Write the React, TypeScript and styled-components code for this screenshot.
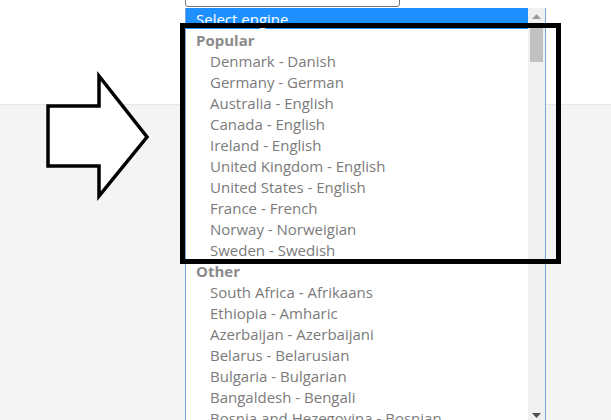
import React from 'react';
import styled, { createGlobalStyle } from 'styled-components';

const GlobalStyle = createGlobalStyle`
  html, body {
    margin: 0;
    padding: 0;
    overflow: hidden;
  }
  body {
    font-family: 'Open Sans', 'Liberation Sans', sans-serif;
    background: #f4f4f4;
  }
`;

const Page = styled.div`
  position: relative;
  width: 611px;
  height: 420px;
  overflow: hidden;
  background: #f4f4f4;
`;

const Header = styled.div`
  display: flex;
  align-items: flex-start;
  height: 105px;
  background: #fff;
  border-bottom: 1px solid #e6e6e6;
  padding-left: 185px;
  box-sizing: border-box;
`;

const SelectBox = styled.div`
  width: 215px;
  height: 28px;
  margin-top: -21px;
  box-sizing: border-box;
  border: 1px solid #767676;
  border-radius: 3px;
  background: #fff;
`;

const Dropdown = styled.div`
  position: absolute;
  top: 8px;
  left: 185px;
  width: 361px;
  height: 416px;
  box-sizing: border-box;
  display: flex;
  background: #fff;
  border-left: 1px solid #7aa3dc;
  border-right: 1px solid #7aa3dc;
  overflow: hidden;
`;

const List = styled.div`
  flex: 1;
  display: flex;
  flex-direction: column;
`;

const Row = styled.div<{ $kind?: 'selected' | 'group' | 'item' }>`
  flex: none;
  height: 21px;
  box-sizing: border-box;
  padding-top: 1px;
  line-height: 21px;
  font-size: 15px;
  white-space: nowrap;
  padding-left: ${(p) => (p.$kind === 'item' ? '24px' : '10px')};
  font-weight: ${(p) => (p.$kind === 'group' ? 700 : 400)};
  color: ${(p) => (p.$kind === 'selected' ? '#fff' : p.$kind === 'group' ? '#8a8a8a' : '#7b7b7b')};
  background: ${(p) => (p.$kind === 'selected' ? '#1e90ff' : 'transparent')};
`;

const Scrollbar = styled.div`
  width: 17px;
  background: #f0f0f0;
  display: flex;
  flex-direction: column;
  align-items: center;
`;

const ScrollButton = styled.div`
  height: 17px;
  width: 17px;
  display: flex;
  align-items: center;
  justify-content: center;
`;

const Thumb = styled.div`
  width: 13px;
  height: 34px;
  margin-top: 3px;
  background: #c1c1c1;
`;

const Track = styled.div`
  flex: 1;
`;

const Highlight = styled.div`
  position: absolute;
  left: 180px;
  top: 23px;
  width: 381px;
  height: 241px;
  box-sizing: border-box;
  border: 5px solid #000;
`;

const ArrowMark = styled.svg`
  position: absolute;
  left: 0;
  top: 0;
`;

const popular = [
  'Denmark - Danish',
  'Germany - German',
  'Australia - English',
  'Canada - English',
  'Ireland - English',
  'United Kingdom - English',
  'United States - English',
  'France - French',
  'Norway - Norweigian',
  'Sweden - Swedish',
];

const other = [
  'South Africa - Afrikaans',
  'Ethiopia - Amharic',
  'Azerbaijan - Azerbaijani',
  'Belarus - Belarusian',
  'Bulgaria - Bulgarian',
  'Bangaldesh - Bengali',
  'Bosnia and Hezegovina - Bosnian',
];

const App: React.FC = () => {
  return (
    <Page>
      <GlobalStyle />
      <Header>
        <SelectBox />
      </Header>
      <Dropdown>
        <List>
          <Row $kind="selected">Select engine</Row>
          <Row $kind="group">Popular</Row>
          {popular.map((p) => (
            <Row key={p} $kind="item">
              {p}
            </Row>
          ))}
          <Row $kind="group">Other</Row>
          {other.map((o) => (
            <Row key={o} $kind="item">
              {o}
            </Row>
          ))}
        </List>
        <Scrollbar>
          <ScrollButton>
            <svg width="9" height="5" viewBox="0 0 9 5">
              <path d="M0 5 L4.5 0 L9 5 Z" fill="#a3989c" />
            </svg>
          </ScrollButton>
          <Thumb />
          <Track />
          <ScrollButton>
            <svg width="9" height="5" viewBox="0 0 9 5">
              <path d="M0 0 L4.5 5 L9 0 Z" fill="#505050" />
            </svg>
          </ScrollButton>
        </Scrollbar>
      </Dropdown>
      <Highlight />
      <ArrowMark width="160" height="210" viewBox="0 0 160 210">
        <polygon
          points="48,106 99,106 99,76 147,137 99,196 99,166 48,166"
          fill="#fff"
          stroke="#000"
          strokeWidth="3.5"
          strokeLinejoin="miter"
        />
      </ArrowMark>
    </Page>
  );
};

export default App;
